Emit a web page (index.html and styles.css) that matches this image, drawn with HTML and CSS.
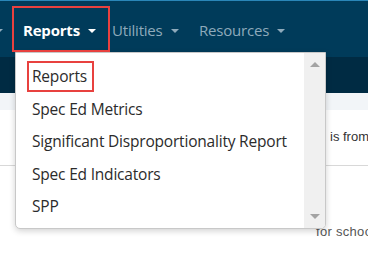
FILE: index.html
```html
<!DOCTYPE html>
<html>
<head>
<meta charset="utf-8">
<title>Reports menu</title>
<link rel="stylesheet" href="styles.css">
</head>
<body>
<div class="topline"></div>
<div class="navbar">
  <div class="nav-item prev"><span class="caret"></span></div>
  <div class="nav-item active">Reports <span class="caret"></span></div>
  <div class="nav-item">Utilities <span class="caret"></span></div>
  <div class="nav-item">Resources <span class="caret"></span></div>
</div>
<div class="subbar"></div>
<div class="crumbs"></div>
<div class="content">
  <div class="note">is from s</div>
  <div class="rule"></div>
  <div class="note2">for schoo</div>
</div>

<div class="dropdown">
  <ul class="menu">
    <li>Reports</li>
    <li>Spec Ed Metrics</li>
    <li>Significant Disproportionality Report</li>
    <li>Spec Ed Indicators</li>
    <li>SPP</li>
  </ul>
  <div class="scroll">
    <span class="arr up"></span>
    <span class="arr down"></span>
  </div>
</div>

<div class="mark mark-nav"></div>
<div class="mark mark-item"></div>
</body>
</html>
```

FILE: styles.css
```css
* {margin:0; padding:0; box-sizing:border-box;}
body {background:#fff; font-family:"Open Sans", "Noto Sans", sans-serif; width:368px; height:254px; overflow:hidden; position:relative;}

.topline {height:1px; background:#2a86b8;}
.navbar {height:56px; background:#003b5a; display:flex; align-items:center; padding-top:2px;}
.nav-item {color:#8eaabb; font-size:15px; display:flex; align-items:center; white-space:nowrap; letter-spacing:-0.2px;}
.nav-item.prev {width:23px;}
.nav-item.prev .caret {margin-left:-5px;}
.nav-item.active {color:#fff; font-weight:bold; width:89px;}
.nav-item + .nav-item + .nav-item {width:87px;}
.caret {display:inline-block; width:0; height:0; border-left:4px solid transparent; border-right:4px solid transparent; border-top:4px solid currentColor; margin-left:8px; margin-top:1px;}
.nav-item.active .caret {margin-left:8px;}

.subbar {height:36px; background:#002b43;}
.crumbs {height:17px; background:#f2f5f8;}

.content {height:144px; font-family:"Liberation Sans", sans-serif; font-size:13px; color:#333; white-space:nowrap; overflow:hidden;}
.note {padding:19px 0 0 330px; height:55px;}
.rule {height:1px; background:#d8d8d8;}
.note2 {padding:58px 0 0 316px; color:#555; letter-spacing:0.3px;}

.dropdown {position:absolute; left:15px; top:52px; width:311px; height:177px; background:#fff; border:1px solid #c8c8c8; border-radius:0 0 5px 5px; box-shadow:0 2px 6px rgba(0,0,0,0.18); display:flex; overflow:hidden;}
.menu {list-style:none; flex:1; padding:7px 0 0 16px; font-size:15.5px; color:#2b2b2b; letter-spacing:-0.2px;}
.menu li {height:32.5px; line-height:32.5px; white-space:nowrap;}
.scroll {width:21px; background:#f0f0f0; position:relative;}
.arr {position:absolute; left:6px; width:0; height:0; border-left:5px solid transparent; border-right:5px solid transparent;}
.arr.up {top:9px; border-bottom:5px solid #a3a3a3;}
.arr.down {bottom:9px; border-top:5px solid #a3a3a3;}

.mark {position:absolute; border:2px solid #e8413f;}
.mark-nav {left:12px; top:6px; width:98px; height:46px;}
.mark-item {left:27px; top:61px; width:67px; height:31px;}
```
